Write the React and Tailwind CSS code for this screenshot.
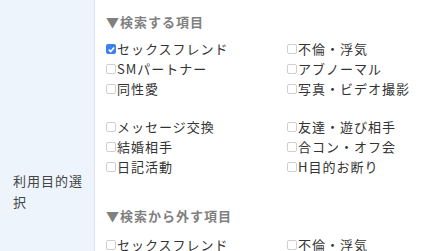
const font = { fontFamily: '"Noto Sans CJK JP", "Liberation Sans", sans-serif' };

const include = [
  [
    ["セックスフレンド", true],
    ["不倫・浮気", false],
    ["SMパートナー", false],
    ["アブノーマル", false],
    ["同性愛", false],
    ["写真・ビデオ撮影", false],
  ],
  [
    ["メッセージ交換", false],
    ["友達・遊び相手", false],
    ["結婚相手", false],
    ["合コン・オフ会", false],
    ["日記活動", false],
    ["H目的お断り", false],
  ],
];

const exclude = [
  [
    ["セックスフレンド", false],
    ["不倫・浮気", false],
    ["SMパートナー", false],
    ["アブノーマル", false],
  ],
];

function Check({ label, checked }) {
  return (
    <label className="flex items-center h-[20px] text-[13px] text-[#333] tracking-[1px]">
      {checked ? (
        <span className="w-[10px] h-[10px] rounded-[2px] bg-[#3b7ff0] flex items-center justify-center mr-[1px] shrink-0">
          <svg viewBox="0 0 10 10" className="w-[9px] h-[9px]">
            <path d="M2 5.2 L4.1 7.3 L8 2.8" stroke="white" strokeWidth="1.8" fill="none" />
          </svg>
        </span>
      ) : (
        <span className="w-[10px] h-[10px] rounded-[2px] border border-[#cfcfcf] bg-white mr-[1px] shrink-0" />
      )}
      {label}
    </label>
  );
}

function Group({ rows }) {
  return (
    <div className="grid grid-cols-[181px_1fr]">
      {rows.map(([label, checked], i) => (
        <Check key={i} label={label} checked={checked} />
      ))}
    </div>
  );
}

export default function App() {
  return (
    <div className="w-[426px] h-[251px] overflow-hidden bg-white" style={font}>
      <div className="flex">
        <div className="w-[95px] shrink-0 bg-[#eef4fc] border-r border-[#dde6f2] pl-[13px] pt-[170px] text-[13px] text-[#444] leading-[21px] tracking-[1px]">
          利用目的選<br />択
        </div>
        <div className="flex-1 pl-[11px] pt-[12px]">
          <div className="text-[13px] text-[#808080] font-bold tracking-[1px] h-[20px] leading-[20px]">▼検索する項目</div>
          <div className="mt-[7px] flex flex-col gap-[18px]">
            {include.map((g, i) => (
              <Group key={i} rows={g} />
            ))}
          </div>
          <div className="mt-[29px] text-[13px] text-[#808080] font-bold tracking-[1px] h-[20px] leading-[20px]">▼検索から外す項目</div>
          <div className="mt-[9px] flex flex-col">
            {exclude.map((g, i) => (
              <Group key={i} rows={g} />
            ))}
          </div>
        </div>
      </div>
    </div>
  );
}
